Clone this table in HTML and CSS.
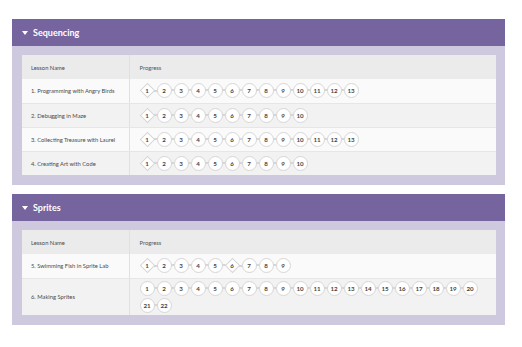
FILE: index.html
```html
<!doctype html>
<html lang="en">
<head>
    <meta charset="UTF-8">
    <title>Progress</title>
    <link rel="stylesheet" href="styles.css">
</head>
<body>
    <div class="unit">
        <div class="unit-head"><span class="caret"></span>Sequencing</div>
        <div class="unit-body">
            <table>
                <thead>
                    <tr><td>Lesson Name</td><td>Progress</td></tr>
                </thead>
                <tbody class="seq"></tbody>
            </table>
        </div>
    </div>
    <div class="unit">
        <div class="unit-head"><span class="caret"></span>Sprites</div>
        <div class="unit-body">
            <table>
                <thead>
                    <tr><td>Lesson Name</td><td>Progress</td></tr>
                </thead>
                <tbody class="spr"></tbody>
            </table>
        </div>
    </div>

<script>
    let $=el=>document.querySelector(el);

    // d = levels drawn as diamonds (concept levels)
    let sequencing=[
        {name:"1. Programming with Angry Birds",levels:13,d:[1]},
        {name:"2. Debugging in Maze",levels:10,d:[1]},
        {name:"3. Collecting Treasure with Laurel",levels:13,d:[1]},
        {name:"4. Creating Art with Code",levels:10,d:[1]},
    ];
    let sprites=[
        {name:"5. Swimming Fish in Sprite Lab",levels:9,d:[1,6]},
        {name:"6. Making Sprites",levels:22,d:[]},
    ];
    function showData(el,data) {
        for(let item of data){
            let tr=document.createElement("tr");
            let bubbles="";
            for(let i=1;i<=item.levels;i++){
                // 20 bubbles fit on a line, no joining line at the wrap
                let end=i%20===0?" row-end":"";
                bubbles+=item.d.includes(i)
                    ?`<span class="bubble diamond${end}"><i></i><b>${i}</b></span>`
                    :`<span class="bubble${end}"><b>${i}</b></span>`;
            }
            tr.innerHTML=`<td>${item.name}</td><td><div class="bubbles">${bubbles}</div></td>`;
            $(el).append(tr);
        }
    }
    showData(".seq",sequencing);
    showData(".spr",sprites);
</script>
</body>
</html>
```

FILE: styles.css
```css
* {
    padding: 0;
    margin: 0;
    box-sizing: border-box;
}
body {
    background: #fff;
    padding-top: 19px;
    font-family: Lato, "Open Sans", sans-serif;
    color: #555;
}
.unit {
    width: 493px;
    margin: 0 0 9px 12px;
    background: #cfc9e0;
}
.unit-head {
    height: 27px;
    display: flex;
    align-items: center;
    padding-left: 10px;
    background: #76649f;
    color: #fff;
    font-size: 9px;
    font-weight: bold;
}
.caret {
    width: 0;
    height: 0;
    border-left: 3px solid transparent;
    border-right: 3px solid transparent;
    border-top: 4px solid #fff;
    margin-right: 5px;
}
.unit-body {
    padding: 9px 9px 10px 10px;
}
table {
    width: 100%;
    border-collapse: collapse;
    font-size: 5.8px;
}
td {
    height: 24px;
    border-bottom: 1px solid #e6e6e6;
    vertical-align: middle;
}
tr:last-child td {
    border-bottom: none;
}
td:first-child {
    width: 107px;
    padding-left: 9px;
    border-right: 1px solid #e0e0e0;
    color: #4a4a4a;
}
td:last-child {
    padding: 2px 0 2px 10px;
}
thead td {
    background: #ebebeb;
    color: #555;
}
tbody tr:nth-child(odd) td {
    background: #fafafa;
}
tbody tr:nth-child(even) td {
    background: #f2f2f2;
}
.bubbles {
    display: flex;
    flex-wrap: wrap;
    row-gap: 2px;
    width: 345px;
}
.bubble {
    position: relative;
    width: 15px;
    height: 15px;
    margin-right: 2px;
    border: 1.6px solid #d6d6d6;
    border-radius: 50%;
    background: #fff;
    display: flex;
    align-items: center;
    justify-content: center;
    font-size: 6.2px;
    color: #444;
}
.bubble b {
    position: relative;
    font-weight: bold;
}
/* thin line joining one bubble to the next */
.bubble::after {
    content: "";
    position: absolute;
    right: -4px;
    top: 5px;
    width: 4px;
    height: 2px;
    background: #d6d6d6;
}
.bubble:last-child::after,
.bubble.row-end::after {
    display: none;
}
.bubble.diamond {
    border: none;
    background: none;
}
.bubble.diamond i {
    position: absolute;
    left: 2px;
    top: 2px;
    width: 11px;
    height: 11px;
    border: 1.6px solid #d6d6d6;
    background: #fff;
    transform: rotate(45deg);
}
.bubble.diamond::after {
    top: 6.5px;
    right: -3px;
}
```
